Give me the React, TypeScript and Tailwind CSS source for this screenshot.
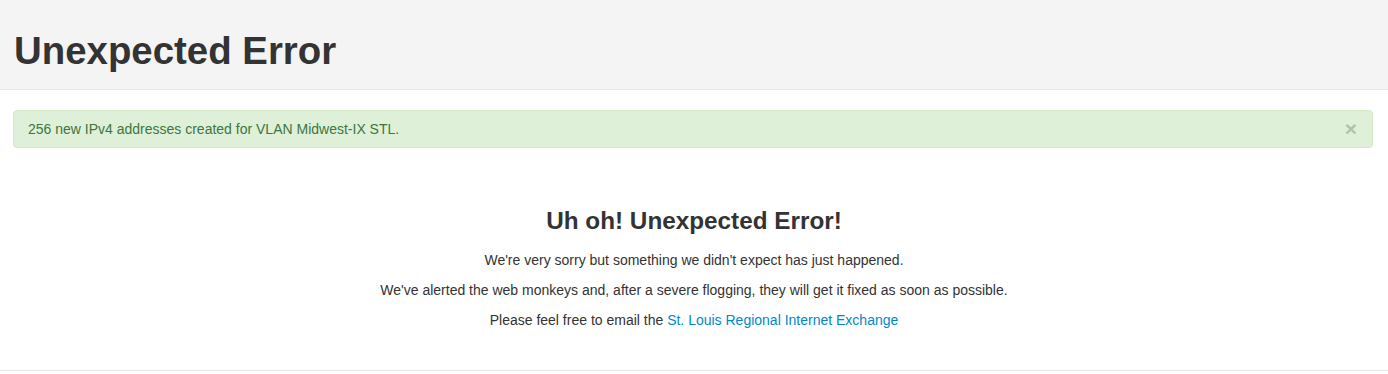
import React from "react";

export default function App() {
  return (
    <div className="min-h-[374px] bg-white text-[#333]" style={{ fontFamily: '"Liberation Sans", Arial, Helvetica, sans-serif' }}>
      <header className="h-[90px] bg-[#f4f4f4] border-b border-[#e6e6e6] pt-[30px] px-[14px]">
        <h1 className="text-[38.4px] leading-[42px] font-bold text-[#333]">Unexpected Error</h1>
      </header>
      <div className="ml-[13px] mr-[15px] mt-[20px] flex items-center justify-between rounded-[4px] border border-[#d6e9c6] bg-[#dff0d8] pl-[14px] pr-[15px] py-[8px] text-[14px] leading-[20px] text-[#3c763d]">
        <span>256 new IPv4 addresses created for VLAN Midwest-IX STL.</span>
        <span className="text-[21px] font-bold leading-[20px] text-black opacity-20">×</span>
      </div>
      <main className="pt-[60px] pb-[40px] text-center">
        <h2 className="text-[24.3px] leading-[26px] font-bold text-[#333]">Uh oh! Unexpected Error!</h2>
        <div className="mt-[16px] flex flex-col gap-[10px] text-[14px] leading-[20px] text-[#333]">
          <p>We're very sorry but something we didn't expect has just happened.</p>
          <p>We've alerted the web monkeys and, after a severe flogging, they will get it fixed as soon as possible.</p>
          <p>
            Please feel free to email the{" "}
            <a href="#" className="text-[#0088cc]">St. Louis Regional Internet Exchange</a>
          </p>
        </div>
      </main>
      <footer className="border-t border-[#e5e5e5] h-[4px]"></footer>
    </div>
  );
}
